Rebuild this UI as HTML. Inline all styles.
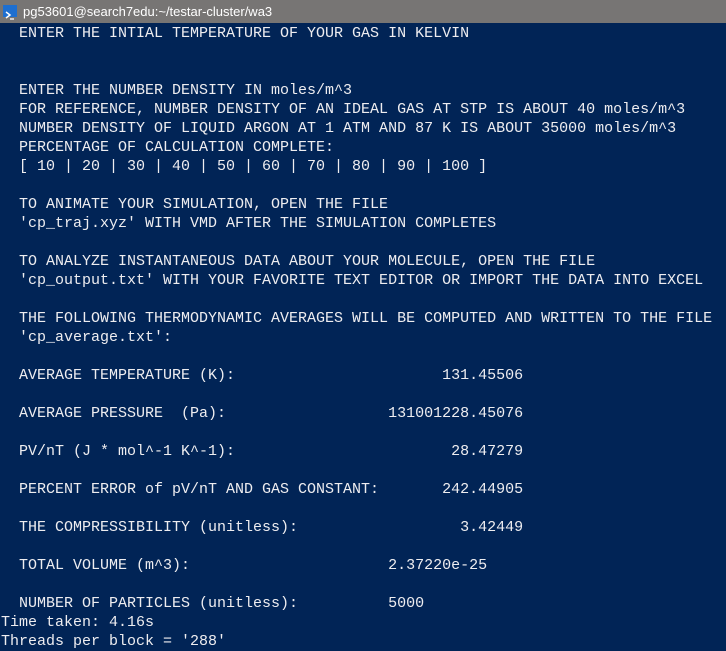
<!DOCTYPE html>
<html><head><meta charset="utf-8"><style>
html,body{margin:0;padding:0;width:726px;height:651px;overflow:hidden;background:#012456;}
.t{position:absolute;left:0;top:0;width:726px;height:23px;background:#777574;color:#fff;font-family:"Liberation Sans",sans-serif;font-size:13px;line-height:23px;}
.t span{position:absolute;left:23px;top:0;}
.ic{position:absolute;left:3px;top:5px;width:14px;height:12px;background:#1e6fd0;}
pre{position:absolute;left:1px;top:24px;margin:0;font-family:"Liberation Mono",monospace;font-size:15px;line-height:19px;color:#eeedf0;}
</style></head><body>
<div class="t"><div class="ic"><svg width="14" height="12"><path d="M3 3 L7 6 L3 9" stroke="#fff" stroke-width="1.5" fill="none"/><path d="M7 10 H11" stroke="#fff" stroke-width="1.3"/></svg></div><span>pg53601@search7edu:~/testar-cluster/wa3</span></div>
<pre>  ENTER THE INTIAL TEMPERATURE OF YOUR GAS IN KELVIN


  ENTER THE NUMBER DENSITY IN moles/m^3
  FOR REFERENCE, NUMBER DENSITY OF AN IDEAL GAS AT STP IS ABOUT 40 moles/m^3
  NUMBER DENSITY OF LIQUID ARGON AT 1 ATM AND 87 K IS ABOUT 35000 moles/m^3
  PERCENTAGE OF CALCULATION COMPLETE:
  [ 10 | 20 | 30 | 40 | 50 | 60 | 70 | 80 | 90 | 100 ]

  TO ANIMATE YOUR SIMULATION, OPEN THE FILE
  'cp_traj.xyz' WITH VMD AFTER THE SIMULATION COMPLETES

  TO ANALYZE INSTANTANEOUS DATA ABOUT YOUR MOLECULE, OPEN THE FILE
  'cp_output.txt' WITH YOUR FAVORITE TEXT EDITOR OR IMPORT THE DATA INTO EXCEL

  THE FOLLOWING THERMODYNAMIC AVERAGES WILL BE COMPUTED AND WRITTEN TO THE FILE
  'cp_average.txt':

  AVERAGE TEMPERATURE (K):                       131.45506

  AVERAGE PRESSURE  (Pa):                  131001228.45076

  PV/nT (J * mol^-1 K^-1):                        28.47279

  PERCENT ERROR of pV/nT AND GAS CONSTANT:       242.44905

  THE COMPRESSIBILITY (unitless):                  3.42449

  TOTAL VOLUME (m^3):                      2.37220e-25

  NUMBER OF PARTICLES (unitless):          5000
Time taken: 4.16s
Threads per block = '288'</pre>
</body></html>
